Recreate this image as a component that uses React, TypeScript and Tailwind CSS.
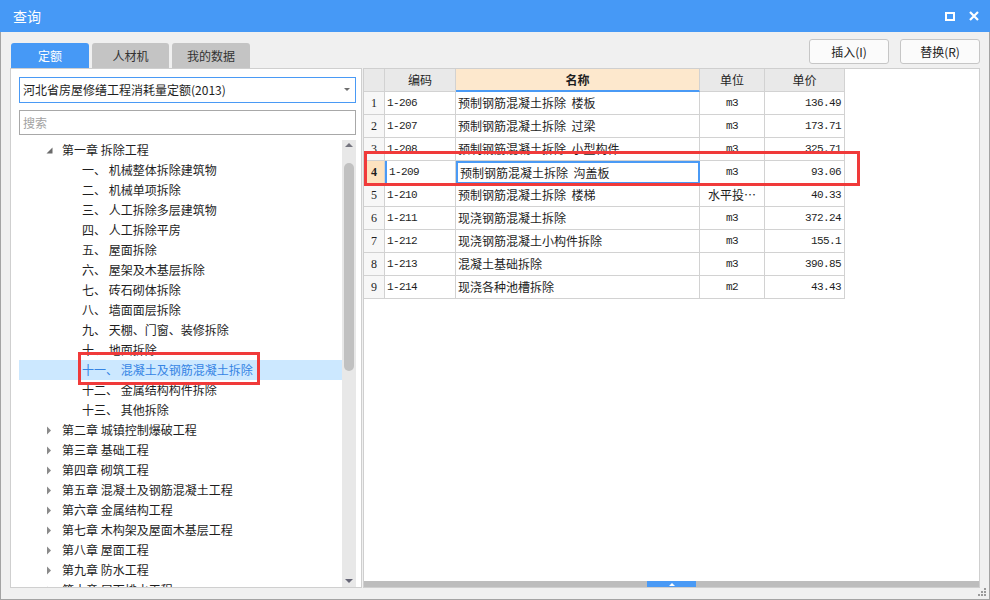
import React from 'react'

type Node = { label: string; chapter?: boolean; open?: boolean; selected?: boolean }

const treeRows: Node[] = [
  { label: '第一章 拆除工程', chapter: true, open: true },
  { label: '一、 机械整体拆除建筑物' },
  { label: '二、 机械单项拆除' },
  { label: '三、 人工拆除多层建筑物' },
  { label: '四、 人工拆除平房' },
  { label: '五、 屋面拆除' },
  { label: '六、 屋架及木基层拆除' },
  { label: '七、 砖石砌体拆除' },
  { label: '八、 墙面面层拆除' },
  { label: '九、 天棚、门窗、装修拆除' },
  { label: '十、 地面拆除' },
  { label: '十一、 混凝土及钢筋混凝土拆除', selected: true },
  { label: '十二、 金属结构构件拆除' },
  { label: '十三、 其他拆除' },
  { label: '第二章 城镇控制爆破工程', chapter: true },
  { label: '第三章 基础工程', chapter: true },
  { label: '第四章 砌筑工程', chapter: true },
  { label: '第五章 混凝土及钢筋混凝土工程', chapter: true },
  { label: '第六章 金属结构工程', chapter: true },
  { label: '第七章 木构架及屋面木基层工程', chapter: true },
  { label: '第八章 屋面工程', chapter: true },
  { label: '第九章 防水工程', chapter: true },
  { label: '第十章 屋面排水工程', chapter: true },
]

const rows = [
  { code: '1-206', name: '预制钢筋混凝土拆除  楼板', unit: 'm3', price: '136.49' },
  { code: '1-207', name: '预制钢筋混凝土拆除  过梁', unit: 'm3', price: '173.71' },
  { code: '1-208', name: '预制钢筋混凝土拆除  小型构件', unit: 'm3', price: '325.71' },
  { code: '1-209', name: '预制钢筋混凝土拆除  沟盖板', unit: 'm3', price: '93.06' },
  { code: '1-210', name: '预制钢筋混凝土拆除  楼梯', unit: '水平投…', price: '40.33' },
  { code: '1-211', name: '现浇钢筋混凝土拆除', unit: 'm3', price: '372.24' },
  { code: '1-212', name: '现浇钢筋混凝土小构件拆除', unit: 'm3', price: '155.1' },
  { code: '1-213', name: '混凝土基础拆除', unit: 'm3', price: '390.85' },
  { code: '1-214', name: '现浇各种池槽拆除', unit: 'm2', price: '43.43' },
]

const mono = "font-['Liberation_Mono',monospace] text-[11px] tracking-[-0.6px]"

export default function App() {
  const current = 3

  return (
    <div className="w-[990px] h-[600px] overflow-hidden flex flex-col bg-[#f0f0f0] font-['Noto_Sans_CJK_SC','Noto_Sans',sans-serif] text-[12px] text-[#1e1e1e]">
      {/* Title bar */}
      <div className="h-[32px] shrink-0 bg-[#4699f6] flex items-center justify-between pl-[13px] pr-[11px] text-white">
        <span className="text-[14px] leading-none">查询</span>
        <div className="flex items-center gap-[14px]">
          <svg width="10" height="9" viewBox="0 0 10 9">
            <rect x="1" y="1" width="8" height="7" fill="none" stroke="#fff" strokeWidth="2" />
          </svg>
          <svg width="10" height="10" viewBox="0 0 10 10">
            <path d="M1 1 L9 9 M9 1 L1 9" stroke="#fff" strokeWidth="2.2" />
          </svg>
        </div>
      </div>

      {/* Body */}
      <div className="relative flex-1 min-h-0 flex flex-col border-x border-b border-[#a3a3a3] px-[9px] pb-[11px]">
        {/* tabs + buttons */}
        <div className="h-[36px] shrink-0 flex justify-between">
          <div className="flex items-end gap-[2px] pl-[1px]">
            <div className="w-[78px] h-[25px] rounded-t-[3px] bg-[#4699f6] text-white flex items-center justify-center">定额</div>
            <div className="w-[77px] h-[25px] rounded-t-[3px] bg-[#c4c4c4] text-[#333] flex items-center justify-center ml-[1px]">人材机</div>
            <div className="w-[78px] h-[25px] rounded-t-[3px] bg-[#c4c4c4] text-[#333] flex items-center justify-center ml-[1px]">我的数据</div>
          </div>
          <div className="flex gap-[11px] pt-[7px]">
            <button className="w-[80px] h-[25px] rounded-[3px] border border-[#c6c6c6] bg-[#fbfbfb] text-[#222]">插入(I)</button>
            <button className="w-[80px] h-[25px] rounded-[3px] border border-[#c6c6c6] bg-[#fbfbfb] text-[#222]">替换(R)</button>
          </div>
        </div>

        {/* panels */}
        <div className="flex-1 flex min-h-0">
          {/* left */}
          <div className="w-[352px] shrink-0 min-h-0 bg-white border border-[#cfcfcf] flex flex-col pl-[8px] pr-[5px] pt-[8px]">
            <div className="h-[26px] shrink-0 border border-[#4a9af5] flex items-center justify-between pl-[3px] pr-[5px]">
              <span>河北省房屋修缮工程消耗量定额(2013)</span>
              <svg width="6" height="4" viewBox="0 0 6 4">
                <path d="M0 0 H6 L3 3 Z" fill="#6e6e6e" />
              </svg>
            </div>
            <div className="h-[25px] shrink-0 mt-[7px] border border-[#a8a8a8] flex items-center pl-[3px] text-[#a2a2a2]">搜索</div>
            <div className="flex-1 min-h-0 mt-[5px] flex">
              <div className="flex-1 overflow-hidden">
                {treeRows.map((n, i) => (
                  <div
                    key={i}
                    className={
                      'h-[20px] flex items-center whitespace-nowrap ' +
                      (n.selected ? 'bg-[#cce8ff] text-[#3584e4]' : '')
                    }
                  >
                    {n.chapter ? (
                      <>
                        <span className="w-[43px] shrink-0 flex justify-end pr-[9px]">
                          {n.open ? (
                            <svg width="7" height="7" viewBox="0 0 7 7">
                              <path d="M6.5 0.5 V6.5 H0.5 Z" fill="#6b6b6b" />
                            </svg>
                          ) : (
                            <svg width="7" height="9" viewBox="0 0 7 9">
                              <path d="M1 0.5 L5 4.5 L1 8.5 Z" fill="#8a8a8a" />
                            </svg>
                          )}
                        </span>
                        <span>{n.label}</span>
                      </>
                    ) : (
                      <span className="pl-[63px] whitespace-pre">{n.label}</span>
                    )}
                  </div>
                ))}
              </div>
              {/* vertical scrollbar */}
              <div className="w-[14px] shrink-0 bg-[#e8e8e8] flex flex-col items-center">
                <svg className="mt-[2px]" width="8" height="5" viewBox="0 0 8 5">
                  <path d="M0 5 L4 1 L8 5 Z" fill="#75757f" />
                </svg>
                <div className="mt-[16px] w-[10px] h-[208px] rounded-full bg-[#c1c1c1]" />
                <div className="flex-1" />
                <svg className="mb-[3px]" width="8" height="5" viewBox="0 0 8 5">
                  <path d="M0 0 L8 0 L4 4 Z" fill="#666676" />
                </svg>
              </div>
            </div>
          </div>

          {/* right */}
          <div className="flex-1 min-h-0 ml-[1px] bg-white border border-[#cfcfcf] flex flex-col">
            <div className="flex-1 min-h-0">
              <div className="grid grid-cols-[21px_71px_244px_65px_80px] w-[481px] auto-rows-[23px]">
                <div className="bg-[#e9e9e9] border-r border-b border-[#d2d2d2]" />
                <div className="bg-[#e9e9e9] border-r border-b border-[#d2d2d2] flex items-center justify-center">编码</div>
                <div className="bg-[#fde8cd] border-r border-[#d2d2d2] border-b-2 border-b-[#4a9af5] flex items-center justify-center font-bold">名称</div>
                <div className="bg-[#e9e9e9] border-r border-b border-[#d2d2d2] flex items-center justify-center">单位</div>
                <div className="bg-[#e9e9e9] border-r border-b border-[#d2d2d2] flex items-center justify-center">单价</div>
                {rows.map((r, i) => {
                  const cur = i === current
                  return (
                    <React.Fragment key={r.code}>
                      <div
                        className={
                          "border-r border-b border-[#d2d2d2] flex items-center justify-center font-['Liberation_Serif',serif] text-[12px] " +
                          (cur ? 'bg-[#fde3c0] font-bold' : 'bg-[#f7f7f7]')
                        }
                      >
                        {i + 1}
                      </div>
                      <div
                        className={
                          'border-r border-b border-[#d2d2d2] flex items-center pl-[2px] ' +
                          mono +
                          (cur ? ' border-l-2 border-l-[#4a9af5]' : '')
                        }
                      >
                        {r.code}
                      </div>
                      <div
                        className={
                          'flex items-center pl-[2px] whitespace-pre ' +
                          (cur ? 'border-2 border-[#4a9af5]' : 'border-r border-b border-[#d2d2d2]')
                        }
                      >
                        {r.name}
                      </div>
                      <div
                        className={
                          'border-r border-b border-[#d2d2d2] flex items-center justify-center ' +
                          (r.unit === 'm3' || r.unit === 'm2' ? mono : '')
                        }
                      >
                        {r.unit}
                      </div>
                      <div className={'border-r border-b border-[#d2d2d2] flex items-center justify-end pr-[3px] ' + mono}>
                        {r.price}
                      </div>
                    </React.Fragment>
                  )
                })}
              </div>
            </div>
            {/* horizontal scrollbar */}
            <div className="h-[6px] shrink-0 bg-[#bdbdbd] flex">
              <div className="w-[283px]" />
              <div className="w-[49px] bg-[#4a9af5] flex items-center justify-center">
                <svg width="6" height="4" viewBox="0 0 6 4">
                  <path d="M0 4 L3 1 L6 4 Z" fill="#fff" />
                </svg>
              </div>
            </div>
          </div>
        </div>

        {/* annotation boxes */}
        <div className="absolute left-[77px] top-[320px] w-[182px] h-[33px] border-[3px] border-[#f03a3a] pointer-events-none" />
        <div className="absolute left-[363px] top-[119px] w-[496px] h-[35px] border-[3px] border-[#f03a3a] pointer-events-none" />

        {/* resize grip */}
        <svg className="absolute right-[2px] bottom-[2px]" width="10" height="10" viewBox="0 0 10 10">
          <rect x="7" y="1" width="2" height="2" fill="#9a9a9a" />
          <rect x="4" y="4" width="2" height="2" fill="#9a9a9a" />
          <rect x="7" y="4" width="2" height="2" fill="#9a9a9a" />
          <rect x="1" y="7" width="2" height="2" fill="#9a9a9a" />
          <rect x="4" y="7" width="2" height="2" fill="#9a9a9a" />
          <rect x="7" y="7" width="2" height="2" fill="#9a9a9a" />
        </svg>
      </div>
    </div>
  )
}
